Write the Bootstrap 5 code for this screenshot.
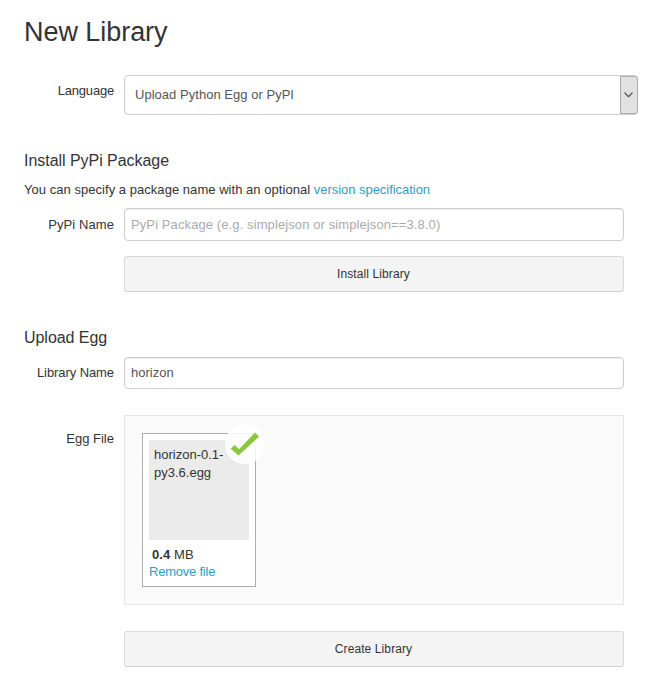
<!DOCTYPE html>
<html lang="en">
<head>
<meta charset="utf-8">
<meta name="viewport" content="width=device-width, initial-scale=1">
<title>New Library</title>
<link href="https://cdn.jsdelivr.net/npm/bootstrap@5.3.0/dist/css/bootstrap.min.css" rel="stylesheet">
<style>
body { font-family: "Liberation Sans", Arial, sans-serif; font-size: 13px; line-height: 18px; color: #333; background: #fff; }
.library-form { width: 638px; padding: 14px 0 0 24px; }
.library-form a { color: #2b9fc3; letter-spacing: -.04px; }
.page-title { font-size: 27px; line-height: 36px; margin: 0 0 25px; font-weight: 400; letter-spacing: -.05px; }
.section-title { font-size: 16px; line-height: 20px; margin: 36px 0 0; font-weight: 400; letter-spacing: -.04px; }
.intro { margin: 10px 0 9px; letter-spacing: .04px; }
.field-label { width: 90px; margin-right: 10px; padding-top: 7px; flex: none; text-align: right; }
.label-language { letter-spacing: -.2px; }
.label-pypi { padding-top: 8px; letter-spacing: .08px; }
.label-library { letter-spacing: -.08px; }
.label-file { padding-top: 15px; }
.field-body { width: 500px; }
.name-row { margin-top: 9px; }
.file-row { margin-top: 26px; }
.language-select { width: 514px; height: 40px; border: 1px solid #ccc; border-radius: 4px; color: #555; }
.select-value { padding-left: 10px; letter-spacing: .03px; }
.select-arrow { width: 18px; margin-right: -1px; padding-right: 2px; background: #e1e1e1; border: 1px solid #adadad; border-radius: 0 3px 3px 0; }
.form-control.field-input { height: 32px; font-size: 13px; line-height: 18px; padding: 5px 6px 6px; color: #555; border: 1px solid #ccc; border-radius: 4px; box-shadow: inset 0 1px 1px rgba(0,0,0,.075); }
.form-control.pypi-input { height: 33px; letter-spacing: .1px; }
.form-control.field-input::placeholder { color: #aaa; }
.btn.action-btn { height: 36px; margin-left: 100px; padding: 0 1px 0 0; font-size: 12px; line-height: 18px; letter-spacing: .1px; color: #333; background: #f4f4f4; border: 1px solid #dadada; border-bottom-color: #d0d0d0; border-radius: 3px; }
.btn.install-btn { margin-top: 15px; }
.btn.create-btn { margin-top: 26px; }
.dropzone { height: 190px; padding: 17px; background: #fafafa; border: 1px solid #e5e5e5; }
.file-preview { width: 114px; height: 154px; padding: 6px; background: #fff; border: 1px solid #acacac; }
.file-details { height: 100px; padding: 6px 5px 5px; background: #ebebeb; }
.file-size { padding: 6px 0 0 3px; line-height: 17px; letter-spacing: .1px; }
.library-form .remove-link { line-height: 17px; letter-spacing: -.22px; }
.success-badge { top: -10px; right: -10px; width: 40px; height: 40px; }
</style>
<script src="https://cdn.jsdelivr.net/npm/bootstrap@5.3.0/dist/js/bootstrap.bundle.min.js" defer></script>
</head>
<body>
<main class="library-form">
  <h1 class="page-title">New Library</h1>

  <div class="d-flex">
    <div class="field-label label-language">Language</div>
    <div class="language-select d-flex flex-shrink-0" role="combobox" aria-label="Language" aria-expanded="false">
      <div class="select-value flex-grow-1 d-flex align-items-center">Upload Python Egg or PyPI</div>
      <div class="select-arrow d-flex align-items-center justify-content-center">
        <svg width="9" height="6" viewBox="0 0 9 6" fill="none" stroke="#444" stroke-width="1.2"><path d="M.5.7 4.5 4.7 8.5.7"/></svg>
      </div>
    </div>
  </div>

  <h2 class="section-title">Install PyPi Package</h2>
  <p class="intro">You can specify a package name with an optional <a class="text-decoration-none" href="#">version specification</a></p>
  <div class="d-flex">
    <label class="field-label label-pypi" for="pypi">PyPi Name</label>
    <div class="field-body"><input id="pypi" class="form-control field-input pypi-input" placeholder="PyPi Package (e.g. simplejson or simplejson==3.8.0)"></div>
  </div>
  <button class="btn action-btn install-btn field-body d-block">Install Library</button>

  <h2 class="section-title">Upload Egg</h2>
  <div class="d-flex name-row">
    <label class="field-label label-library" for="name">Library Name</label>
    <div class="field-body"><input id="name" class="form-control field-input" value="horizon"></div>
  </div>
  <div class="d-flex file-row">
    <div class="field-label label-file">Egg File</div>
    <div class="field-body dropzone">
      <div class="file-preview position-relative">
        <div class="file-details">horizon-0.1-py3.6.egg</div>
        <div class="file-size"><strong>0.4</strong> MB</div>
        <a class="remove-link d-block text-decoration-none" href="#">Remove file</a>
        <svg class="success-badge position-absolute" viewBox="0 0 40 40"><circle cx="20" cy="20" r="20" fill="#fff" fill-opacity=".85"/><path d="M5.7 24.7 9.6 21 14 25.3 30 8.5 34.2 12.6 13.5 31.5Z" fill="#8cc63f"/></svg>
      </div>
    </div>
  </div>
  <button class="btn action-btn create-btn field-body d-block">Create Library</button>
</main>
</body>
</html>
